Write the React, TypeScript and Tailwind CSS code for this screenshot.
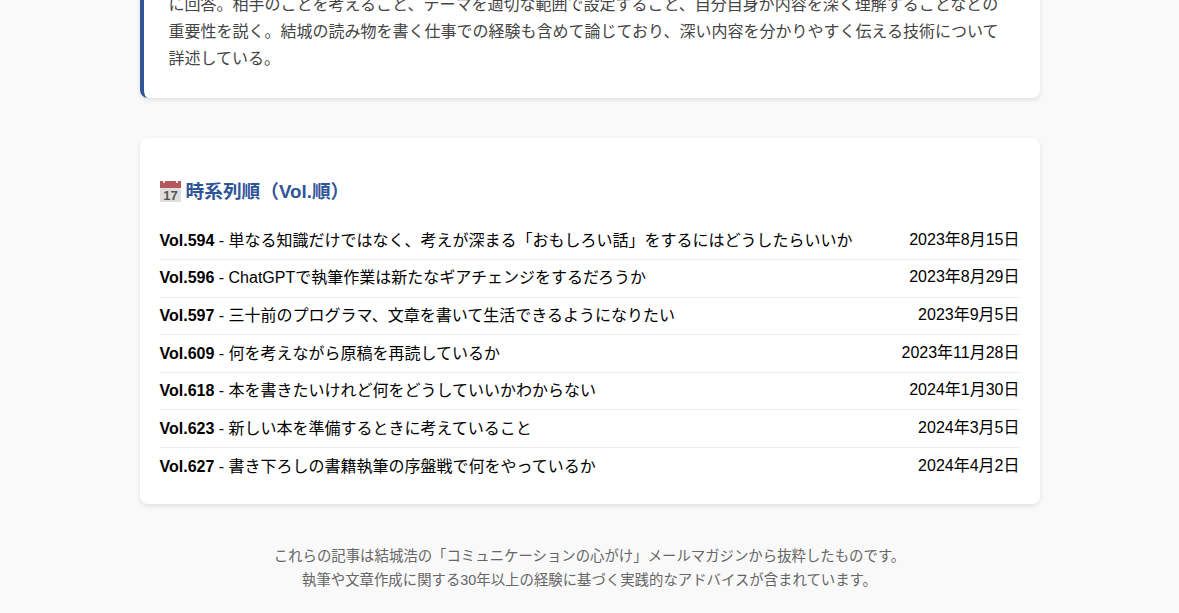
const articles = [
  { vol: "Vol.594", title: "単なる知識だけではなく、考えが深まる「おもしろい話」をするにはどうしたらいいか", date: "2023年8月15日" },
  { vol: "Vol.596", title: "ChatGPTで執筆作業は新たなギアチェンジをするだろうか", date: "2023年8月29日" },
  { vol: "Vol.597", title: "三十前のプログラマ、文章を書いて生活できるようになりたい", date: "2023年9月5日" },
  { vol: "Vol.609", title: "何を考えながら原稿を再読しているか", date: "2023年11月28日" },
  { vol: "Vol.618", title: "本を書きたいけれど何をどうしていいかわからない", date: "2024年1月30日" },
  { vol: "Vol.623", title: "新しい本を準備するときに考えていること", date: "2024年3月5日" },
  { vol: "Vol.627", title: "書き下ろしの書籍執筆の序盤戦で何をやっているか", date: "2024年4月2日" },
];

function CalendarIcon() {
  return (
    <svg className="w-[22px] h-[23px] shrink-0" viewBox="0 0 22 23">
      <rect x="0" y="1" width="21" height="21" fill="#dedede" />
      <rect x="0" y="1" width="21" height="7" fill="#b5585c" />
      <rect x="3" y="1" width="2" height="2" fill="#ecdcdc" />
      <rect x="16" y="1" width="2" height="2" fill="#ecdcdc" />
      <text x="10.5" y="20" textAnchor="middle" fontSize="13" fill="#555" fontFamily="'Liberation Sans', sans-serif">17</text>
    </svg>
  );
}

export default function App() {
  return (
    <div className="h-[613px] overflow-hidden bg-[#f9f9f9] font-['Liberation_Sans','Noto_Sans_CJK_JP',sans-serif]">
      <div className="w-[900px] mx-auto -mt-[34px]">
        {/* Summary card */}
        <div className="bg-white rounded-lg border-l-4 border-[#2f5597] pl-[25px] pr-[30px] py-[25px] shadow-[0_2px_5px_rgba(0,0,0,0.1)] text-base leading-[27.2px] text-[#444]">
          <p>
            に回答。相手のことを考えること、テーマを適切な範囲で設定すること、自分自身が内容を深く理解することなどの重要性を説く。結城の読み物を書く仕事での経験も含めて論じており、深い内容を分かりやすく伝える技術について詳述している。
          </p>
        </div>

        {/* Timeline card */}
        <div className="mt-10 bg-white rounded-lg px-5 pt-10 pb-[19px] shadow-[0_2px_5px_rgba(0,0,0,0.1)]">
          <h2 className="flex items-center gap-1 text-[18.72px] font-bold leading-[28px] text-[#2f5597] mb-[17px]">
            <CalendarIcon />
            時系列順（Vol.順）
          </h2>
          <ul>
            {articles.map((a, i) => (
              <li
                key={a.vol}
                className={`flex justify-between items-center h-[37.55px] text-base text-black ${
                  i < articles.length - 1 ? "border-b border-[#eeeeee]" : ""
                }`}
              >
                <span>
                  <b>{a.vol}</b> - {a.title}
                </span>
                <span className="pb-0.5">{a.date}</span>
              </li>
            ))}
          </ul>
        </div>

        {/* Footer note */}
        <div className="mt-[41px] text-center text-[14.4px] leading-[23.5px] text-[#666]">
          <p>これらの記事は結城浩の「コミュニケーションの心がけ」メールマガジンから抜粋したものです。</p>
          <p>執筆や文章作成に関する30年以上の経験に基づく実践的なアドバイスが含まれています。</p>
        </div>
      </div>
    </div>
  );
}
